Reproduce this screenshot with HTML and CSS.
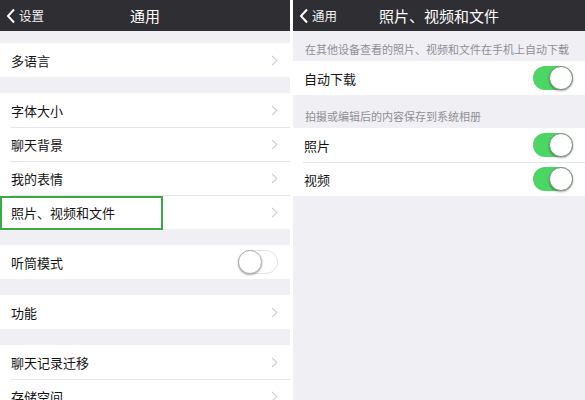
FILE: index.html
```html
<!DOCTYPE html>
<html lang="zh">
<head>
<meta charset="utf-8">
<link rel="stylesheet" href="styles.css">
</head>
<body>
<div class="screens">
  <section class="panel left">
    <header class="nav">
      <div class="back"><svg width="10" height="16" viewBox="0 0 10 16"><polyline points="8,1.5 2,8 8,14.5" fill="none" stroke="#fff" stroke-width="2"/></svg><span>设置</span></div>
      <div class="title">通用</div>
    </header>
    <div class="gap first"></div>
    <div class="group">
      <div class="row"><span class="label">多语言</span><span class="chev"></span></div>
    </div>
    <div class="gap"></div>
    <div class="group">
      <div class="row"><span class="label">字体大小</span><span class="chev"></span></div>
      <div class="row"><span class="label">聊天背景</span><span class="chev"></span></div>
      <div class="row"><span class="label">我的表情</span><span class="chev"></span></div>
      <div class="row"><span class="label">照片、视频和文件</span><span class="chev"></span><span class="highlight"></span></div>
    </div>
    <div class="gap"></div>
    <div class="group">
      <div class="row"><span class="label">听筒模式</span><span class="toggle off"></span></div>
    </div>
    <div class="gap"></div>
    <div class="group">
      <div class="row"><span class="label">功能</span><span class="chev"></span></div>
    </div>
    <div class="gap"></div>
    <div class="group">
      <div class="row"><span class="label">聊天记录迁移</span><span class="chev"></span></div>
      <div class="row"><span class="label">存储空间</span><span class="chev"></span></div>
    </div>
  </section>
  <section class="panel right">
    <header class="nav">
      <div class="back"><svg width="10" height="16" viewBox="0 0 10 16"><polyline points="8,1.5 2,8 8,14.5" fill="none" stroke="#fff" stroke-width="2"/></svg><span>通用</span></div>
      <div class="title">照片、视频和文件</div>
    </header>
    <div class="note top">在其他设备查看的照片、视频和文件在手机上自动下载</div>
    <div class="group">
      <div class="row"><span class="label">自动下载</span><span class="toggle on"></span></div>
    </div>
    <div class="note">拍摄或编辑后的内容保存到系统相册</div>
    <div class="group">
      <div class="row"><span class="label">照片</span><span class="toggle on"></span></div>
      <div class="row"><span class="label">视频</span><span class="toggle on"></span></div>
    </div>
  </section>
</div>
</body>
</html>
```

FILE: styles.css
```css
html, body {
  margin: 0;
  padding: 0;
  background: #ffffff;
}
body {
  font-family: "Noto Sans CJK SC", "Noto Sans", sans-serif;
  color: #141414;
}
.screens {
  display: flex;
  gap: 3px;
  width: 585px;
  height: 400px;
  overflow: hidden;
  background: #ffffff;
}
.panel {
  background: #efeff4;
  height: 400px;
  overflow: hidden;
  display: flex;
  flex-direction: column;
}
.left { width: 290px; flex: none; }
.right { flex: 1; }

.nav {
  position: relative;
  height: 31px;
  flex: none;
  background: #2f2f33;
  display: flex;
  align-items: center;
  justify-content: center;
  color: #fff;
}
.back {
  position: absolute;
  left: 6px;
  top: 0;
  height: 31px;
  display: flex;
  align-items: center;
  gap: 3px;
  font-size: 12.5px;
  color: #f2f2f2;
}
.title {
  font-size: 15px;
  line-height: 31px;
}
.gap { height: 16px; flex: none; }
.gap.first { height: 12px; }

.group {
  background: #fff;
  flex: none;
}
.row {
  position: relative;
  height: 34px;
  display: flex;
  align-items: center;
  justify-content: space-between;
  padding: 0 12px 0 11px;
  font-size: 13px;
}
.row + .row::before {
  content: "";
  position: absolute;
  left: 10px;
  right: 0;
  top: 0;
  height: 1px;
  background: #e6e6ea;
}
.chev {
  width: 6px;
  height: 10px;
  margin-right: 0;
  position: relative;
}
.chev::after {
  content: "";
  position: absolute;
  left: -3px;
  top: 1.5px;
  width: 6px;
  height: 6px;
  border-right: 1.5px solid #c8c8cd;
  border-top: 1.5px solid #c8c8cd;
  transform: rotate(45deg);
}
.highlight {
  position: absolute;
  left: 0;
  top: 1px;
  width: 163px;
  height: 34px;
  box-sizing: border-box;
  border: 2px solid #3ea845;
}
.toggle {
  position: relative;
  width: 40px;
  height: 24px;
  border-radius: 12px;
  box-sizing: border-box;
  flex: none;
}
.toggle::after {
  content: "";
  position: absolute;
  top: 0;
  width: 24px;
  height: 24px;
  border-radius: 50%;
  background: #fff;
  box-sizing: border-box;
  box-shadow: 0 1px 2px rgba(0,0,0,0.35);
}
.toggle.on {
  background: #4cd663;
}
.toggle.on::after {
  right: 0;
  border: 1px solid #8a8a8a;
}
.toggle.off {
  background: #fff;
  border: 1px solid #e4e4e6;
}
.toggle.off::after {
  left: -1px;
  top: -1px;
  border: 1px solid #b0b0b0;
}
.note {
  height: 33px;
  flex: none;
  box-sizing: border-box;
  padding: 0 12px 4px 12px;
  display: flex;
  align-items: flex-end;
  font-size: 11px;
  color: #8f8f94;
  white-space: nowrap;
}
.note.top { height: 30px; }
.right .row { height: 34px; }
.right .group:first-of-type .row { height: 33px; }
```
